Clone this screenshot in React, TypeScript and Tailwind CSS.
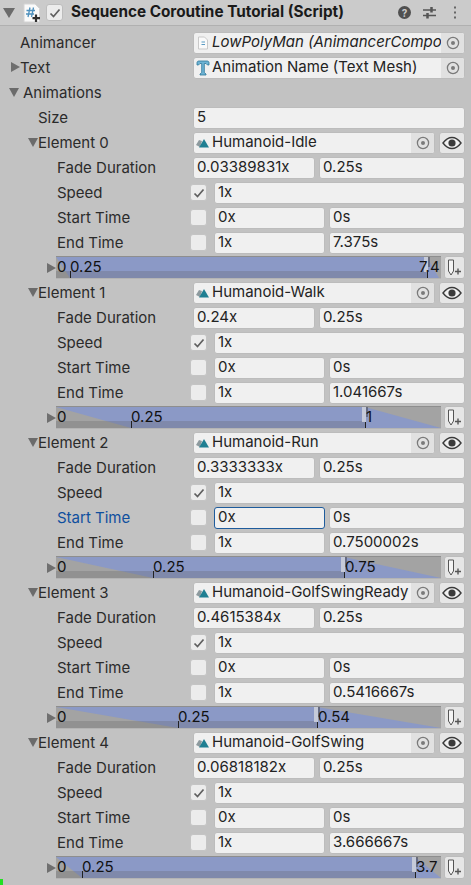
import type { ReactNode } from "react";

type ElementData = {
    clip: string;
    fade: string;
    endSpeed: string;
    endTime: string;
    fadeIn: number;
    endX: number;
    fadeOutEnd: number;
    endLabel: string;
    endLabelX: number;
};

const elements: ElementData[] = [
    { clip: "Humanoid-Idle", fade: "0.03389831x", endSpeed: "1x", endTime: "7.375s", fadeIn: 14, endX: 371, fadeOutEnd: 383, endLabel: "7.4", endLabelX: 363 },
    { clip: "Humanoid-Walk", fade: "0.24x", endSpeed: "1x", endTime: "1.041667s", fadeIn: 75, endX: 309, fadeOutEnd: 385, endLabel: "1", endLabelX: 310 },
    { clip: "Humanoid-Run", fade: "0.3333333x", endSpeed: "1x", endTime: "0.7500002s", fadeIn: 97, endX: 288, fadeOutEnd: 385, endLabel: "0.75", endLabelX: 289 },
    { clip: "Humanoid-GolfSwingReady", fade: "0.4615384x", endSpeed: "1x", endTime: "0.5416667s", fadeIn: 122, endX: 261, fadeOutEnd: 385, endLabel: "0.54", endLabelX: 262 },
    { clip: "Humanoid-GolfSwing", fade: "0.06818182x", endSpeed: "1x", endTime: "3.666667s", fadeIn: 26, endX: 359, fadeOutEnd: 385, endLabel: "3.7", endLabelX: 360 },
];

function Triangle({ open }: { open?: boolean }) {
    return (
        <svg width="10" height="10" viewBox="0 0 10 10" className="shrink-0">
            {open ? <path d="M0 1h10L5 10z" fill="#6b6b6b" /> : <path d="M1 0l9 5-9 5z" fill="#6f6f6f" />}
        </svg>
    );
}

function Row({ label, x, arrow, labelClass, children }: { label: string; x: number; arrow?: ReactNode; labelClass?: string; children?: ReactNode }) {
    return (
        <div className="flex h-[25px] items-center">
            <div className="relative h-full w-[193px] shrink-0">
                {arrow}
                <span className={"absolute top-[2px] leading-[21px] whitespace-nowrap " + (labelClass ?? "text-[#2b2b2b]")} style={{ left: x }}>
                    {label}
                </span>
            </div>
            <div className="flex h-[22px] w-[272px] items-center">{children}</div>
        </div>
    );
}

function Field({ value, className, focused }: { value: string; className?: string; focused?: boolean }) {
    return (
        <div
            className={
                "flex h-[22px] items-center overflow-hidden rounded-[3px] border bg-[#f0f0f0] pl-[3px] whitespace-nowrap text-[#232323] " +
                (focused ? "border-[#1f5c9c] " : "border-[#bcbcbc] ") +
                (className ?? "")
            }
        >
            {value}
        </div>
    );
}

function Target() {
    return (
        <svg width="14" height="14" viewBox="0 0 14 14">
            <circle cx="7" cy="7" r="5.6" fill="none" stroke="#7a7a7a" strokeWidth="1.3" />
            <circle cx="7" cy="7" r="2" fill="#7a7a7a" />
        </svg>
    );
}

function ObjectField({ icon, children, italic, width }: { icon: ReactNode; children: string; italic?: boolean; width: string }) {
    return (
        <div className={"flex h-[22px] items-center overflow-hidden rounded-[3px] border border-[#bcbcbc] bg-[#f0f0f0] " + width}>
            <span className="flex w-[18px] shrink-0 justify-center">{icon}</span>
            <span className={"min-w-0 flex-1 overflow-hidden whitespace-nowrap text-[#232323] " + (italic ? "italic" : "")}>{children}</span>
            <span className="flex h-[20px] w-[23px] shrink-0 items-center justify-center bg-[#e1e1e1]">
                <Target />
            </span>
        </div>
    );
}

function ClipIcon() {
    return (
        <svg width="14" height="12" viewBox="0 0 14 12">
            <path d="M0 8l3-5 3 1-2 6z" fill="#8d9a9e" />
            <path d="M3 10.5L8 2l5 8.5z" fill="#1f7f92" />
        </svg>
    );
}

function ScriptIcon({ small }: { small?: boolean }) {
    if (small) {
        return (
            <svg width="12" height="14" viewBox="0 0 12 14">
                <path d="M1.5 1h6l3 3v9h-9z" fill="#fafafa" stroke="#c9c9c9" />
                <path d="M4.5 6h3.5M4.5 8.5h3.5" stroke="#5b9cc4" strokeWidth="1.2" />
            </svg>
        );
    }
    return (
        <svg width="18" height="20" viewBox="0 0 18 20">
            <path d="M1 1h11l4.5 4.5V19H1z" fill="#fafafa" stroke="#d4d4d4" />
            <path d="M7 4.5L5 14M10.5 4.5L8.5 14M3.5 7.5h8.5M3 11h8" stroke="#4d90bd" strokeWidth="1.3" fill="none" />
            <path d="M13 11.5V19M9.5 15.2h7.5" stroke="#303030" strokeWidth="2.2" />
        </svg>
    );
}

function TextIcon() {
    return (
        <svg width="14" height="16" viewBox="0 0 14 16">
            <path d="M1 5V2.5C1 1.5 2 1 3 1h8c1 0 2 .5 2 1.5V5h-1.5L10 3.5H8.3V12.5L10 14v1H4v-1l1.7-1.5V3.5H4L2.5 5z" fill="#6db3d4" stroke="#2f7698" strokeWidth="0.8" />
        </svg>
    );
}

function Eye() {
    return (
        <div className="flex h-[22px] w-[26px] shrink-0 items-center justify-center rounded-[3px] border border-[#bcbcbc] bg-[#e6e6e6]">
            <svg width="20" height="14" viewBox="0 0 20 14">
                <path d="M1 7c3-4 6-5.5 9-5.5S16 3 19 7c-3 4-6 5.5-9 5.5S4 11 1 7z" fill="#f0f0f0" stroke="#3a3a3a" strokeWidth="1.4" />
                <circle cx="10" cy="7" r="3.6" fill="#3a3a3a" />
            </svg>
        </div>
    );
}

function Check() {
    return (
        <svg width="12" height="12" viewBox="0 0 12 12">
            <path d="M1.5 6.5L4.5 9.5L10.5 2.5" fill="none" stroke="#5f5f5f" strokeWidth="1.7" />
        </svg>
    );
}

function CheckBox({ checked }: { checked?: boolean }) {
    return (
        <div className="ml-[-3px] flex h-[17px] w-[17px] shrink-0 items-center justify-center rounded-[3px] border border-[#c4c4c4] bg-[#ececec]">
            {checked && <Check />}
        </div>
    );
}

function Timeline({ data }: { data: ElementData }) {
    const { fadeIn, endX, fadeOutEnd } = data;
    return (
        <div className="flex h-[25px] items-center">
            <div className="flex w-[56px] shrink-0 justify-end">
                <Triangle />
            </div>
            <div className="relative h-[23px] w-[385px] shrink-0 overflow-hidden bg-[#a3a3a3] text-[#111111] leading-[19px]">
                <svg width="385" height="23" className="absolute inset-0">
                    <path d={`M0 1H${endX}L${fadeOutEnd} 22H${fadeIn}z`} fill="#8b99c6" />
                    <rect x="0" y="15" width={endX} height="7" fill="#5c5c5c" opacity="0.25" />
                    <rect x="0" y="0" width="385" height="1" fill="#8e8e8e" />
                    <rect x="0" y="22" width="385" height="1" fill="#b4b4b4" />
                    <rect x={fadeIn} y="15" width="1" height="7" fill="#222222" />
                    <rect x={endX - 3} y="1" width="4" height="15" fill="#cfd2dc" opacity="0.85" />
                    <rect x={endX + 1} y="1" width="2" height="10" fill="#55586a" opacity="0.7" />
                    <rect x={endX} y="16" width="1" height="6" fill="#222222" />
                </svg>
                <span className="absolute top-[1px] left-[1px]">0</span>
                <span className="absolute top-[1px]" style={{ left: fadeIn }}>0.25</span>
                <span className="absolute top-[1px]" style={{ left: data.endLabelX }}>{data.endLabel}</span>
            </div>
            <div className="ml-[3px] flex h-[23px] w-[21px] shrink-0 items-center justify-center rounded-[3px] border border-[#bcbcbc] bg-[#e6e6e6]">
                <svg width="15" height="17" viewBox="0 0 15 17">
                    <path d="M1.5 1h5v11l-2.5 4-2.5-4z" fill="#f5f5f5" stroke="#555555" />
                    <path d="M11 9.5v6M8 12.5h6" stroke="#555555" strokeWidth="1.4" />
                </svg>
            </div>
        </div>
    );
}

function ElementBlock({ data, index }: { data: ElementData; index: number }) {
    const focused = index === 2;
    return (
        <div>
            <Row label={`Element ${index}`} x={38} arrow={<span className="absolute top-[7px] left-[28px]"><Triangle open /></span>}>
                <ObjectField icon={<ClipIcon />} width="w-[242px]">{data.clip}</ObjectField>
                <span className="ml-[4px]"><Eye /></span>
            </Row>
            <Row label="Fade Duration" x={57}>
                <Field value={data.fade} className="w-[122px]" />
                <Field value="0.25s" className="ml-[4px] w-[146px]" />
            </Row>
            <Row label="Speed" x={57}>
                <CheckBox checked />
                <Field value="1x" className="ml-[7px] w-[251px]" />
            </Row>
            <Row label="Start Time" x={57} labelClass={focused ? "text-[#0f4f9e]" : undefined}>
                <CheckBox />
                <Field value="0x" className="ml-[7px] w-[111px]" focused={focused} />
                <Field value="0s" className="ml-[4px] w-[136px]" />
            </Row>
            <Row label="End Time" x={57}>
                <CheckBox />
                <Field value={data.endSpeed} className="ml-[7px] w-[111px]" />
                <Field value={data.endTime} className="ml-[4px] w-[136px]" />
            </Row>
            <Timeline data={data} />
        </div>
    );
}

export default function App() {
    return (
        <div className="relative h-[885px] w-[471px] overflow-hidden bg-[#c2c2c2] font-['Inter',sans-serif] text-[15px]">
            <div className="flex h-[26px] items-center border-b border-[#b0b0b0] bg-[#cbcbcb] text-[#1a1a1a]">
                <svg width="12" height="10" viewBox="0 0 12 10" className="ml-[3px] shrink-0">
                    <path d="M0 0h12L6 10z" fill="#6b6b6b" />
                </svg>
                <span className="ml-[8px]"><ScriptIcon /></span>
                <div className="ml-[5px] flex h-[17px] w-[17px] items-center justify-center rounded-[3px] border border-[#bdbdbd] bg-[#ececec]">
                    <Check />
                </div>
                <span className="ml-[8px] text-[15.3px] font-bold whitespace-nowrap">Sequence Coroutine Tutorial (Script)</span>
                <div className="ml-auto flex items-center pr-[14px]">
                    <svg width="13" height="13" viewBox="0 0 13 13">
                        <circle cx="6.5" cy="6.5" r="6.5" fill="#505050" />
                        <text x="6.5" y="10.5" textAnchor="middle" fontSize="10" fontWeight="700" fill="#cbcbcb" fontFamily="Inter">?</text>
                    </svg>
                    <svg width="13" height="13" viewBox="0 0 13 13" className="ml-[12px]">
                        <path d="M0 4h13M0 9.5h13" stroke="#555555" strokeWidth="1.5" fill="none" />
                        <path d="M8.5 1v5.5M4.5 7v5.5" stroke="#555555" strokeWidth="2.5" fill="none" />
                    </svg>
                    <svg width="4" height="13" viewBox="0 0 4 13" className="ml-[17px]">
                        <path d="M1 .5h2v2H1zM1 5.5h2v2H1zM1 10.5h2v2H1z" fill="#666666" />
                    </svg>
                </div>
            </div>
            <div className="pt-[4px]">
                <Row label="Animancer" x={20}>
                    <ObjectField icon={<ScriptIcon small />} italic width="w-[272px]">LowPolyMan (AnimancerComponent)</ObjectField>
                </Row>
                <Row label="Text" x={20} arrow={<span className="absolute top-[7px] left-[10px]"><Triangle /></span>}>
                    <ObjectField icon={<TextIcon />} width="w-[272px]">Animation Name (Text Mesh)</ObjectField>
                </Row>
                <Row label="Animations" x={23} arrow={<span className="absolute top-[7px] left-[9px]"><Triangle open /></span>} />
                <Row label="Size" x={38}>
                    <Field value="5" className="w-[272px]" />
                </Row>
                {elements.map((el, i) => (
                    <ElementBlock key={el.clip} data={el} index={i} />
                ))}
            </div>
            <div className="absolute bottom-0 left-0 h-[6px] w-[3px] bg-[#22e022]" />
        </div>
    );
}
